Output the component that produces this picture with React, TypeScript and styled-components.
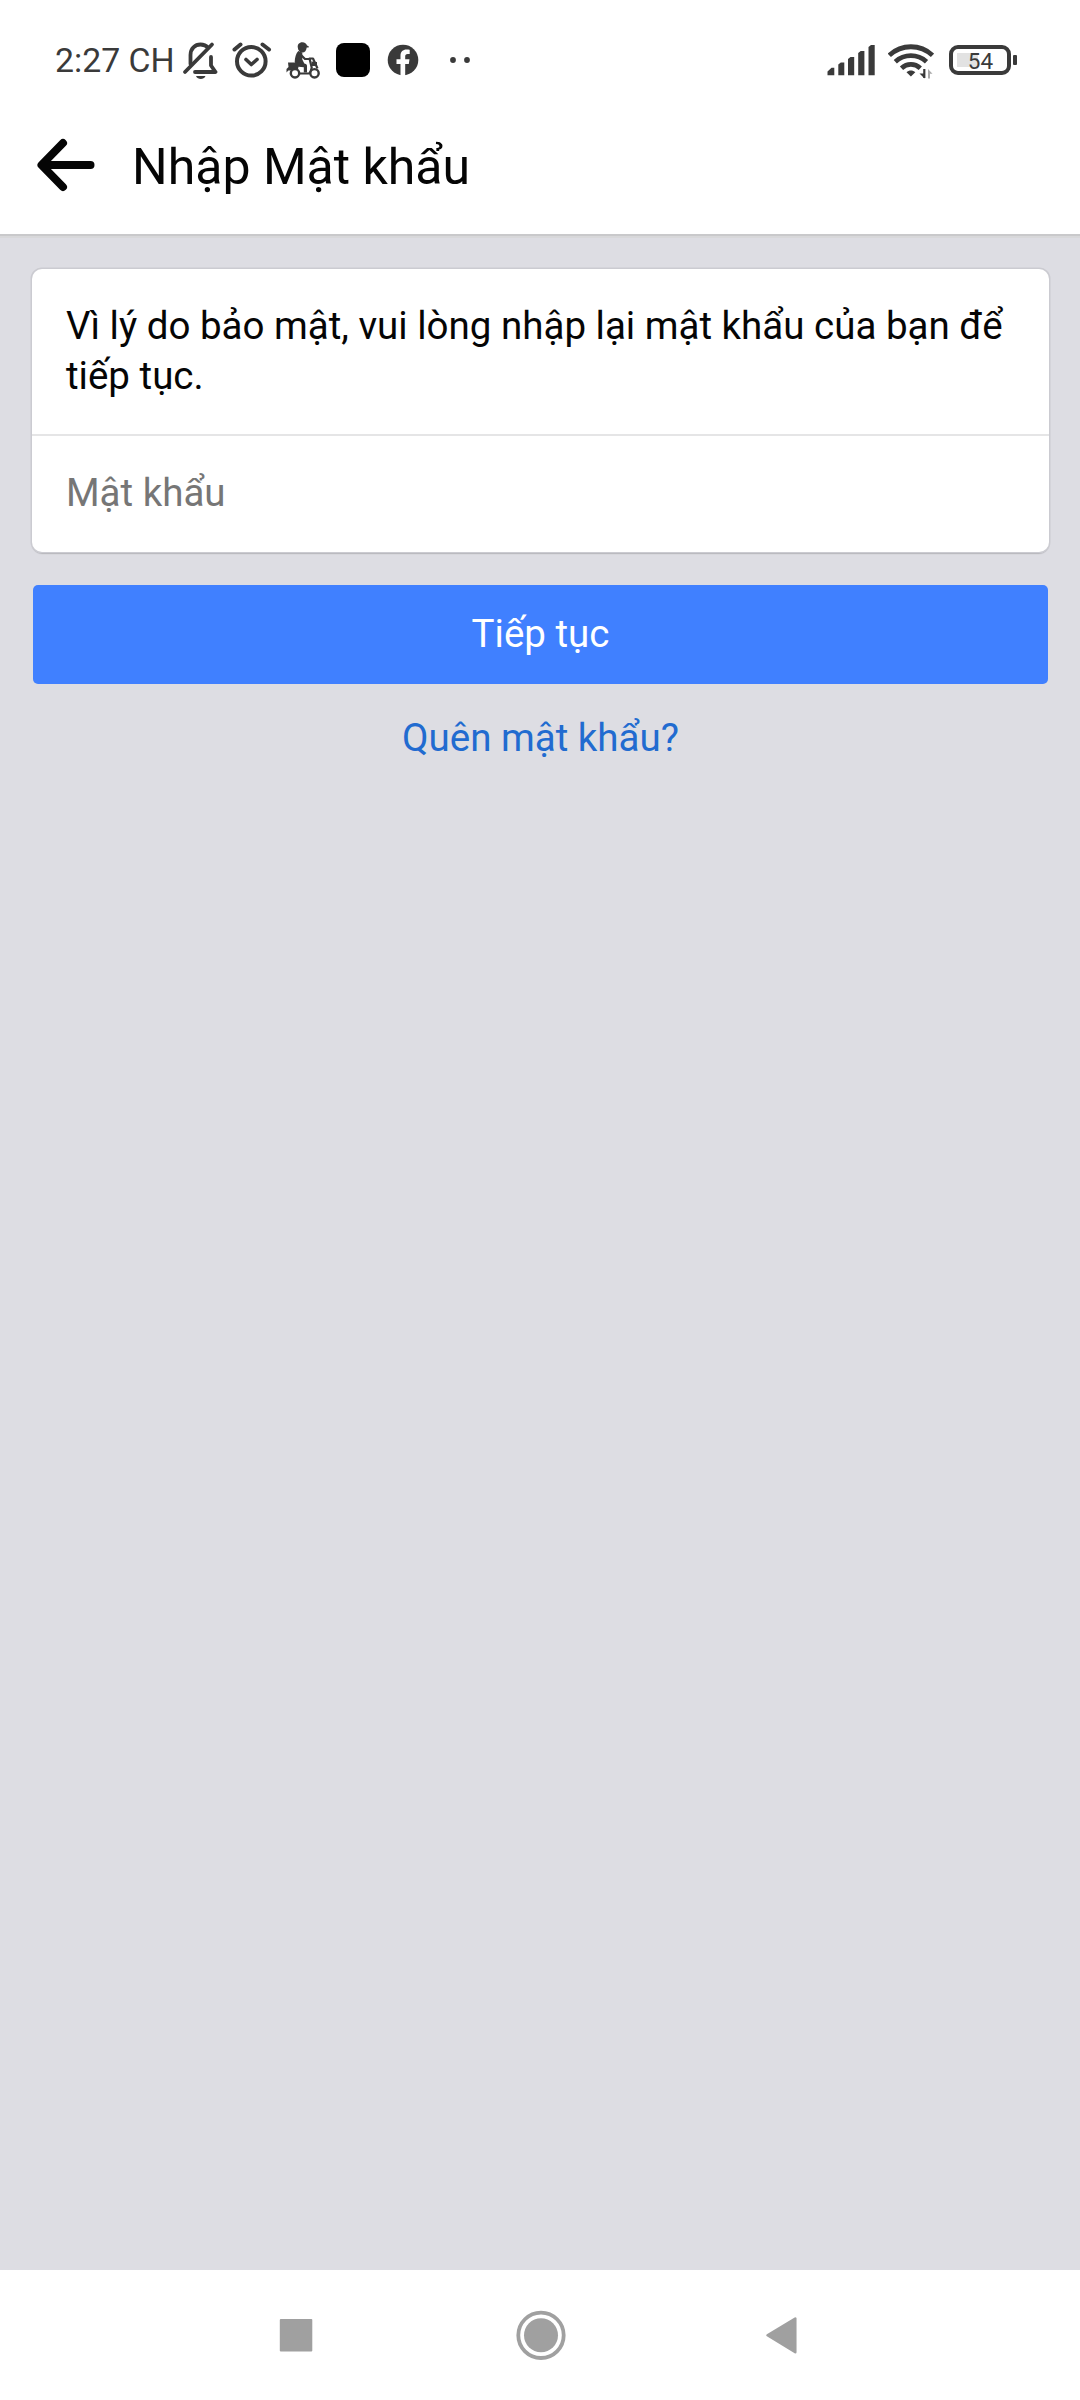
import React from 'react';
import styled, { createGlobalStyle } from 'styled-components';

const GlobalStyle = createGlobalStyle`
  body {
    margin: 0;
    background: #dddde3;
  }
  * {
    box-sizing: border-box;
  }
`;

const Screen = styled.div`
  display: flex;
  flex-direction: column;
  width: 1080px;
  height: 2400px;
  background: #dddde3;
  color: #050505;
  font-family: Roboto, 'Noto Sans', sans-serif;
  overflow: hidden;
`;

const StatusBar = styled.div`
  display: flex;
  align-items: center;
  flex: none;
  height: 120px;
  padding: 0 63px 0 55px;
  background: #fff;
  color: #3a3a3a;
`;

const Clock = styled.span`
  width: 127px;
  font-size: 33.8px;
  line-height: 40px;
  padding-top: 2px;
  white-space: nowrap;
`;

const Glyph = styled.svg<{ $gap?: number }>`
  display: block;
  flex: none;
  margin-left: ${(p) => p.$gap ?? 0}px;
`;

const Spacer = styled.div`
  flex: 1;
`;

const Battery = styled.div`
  display: flex;
  align-items: center;
  gap: 2px;
  margin-left: 15px;
`;

const BatteryShell = styled.div`
  display: flex;
  align-items: center;
  justify-content: center;
  width: 62px;
  height: 30px;
  padding: 1px 0 0 1px;
  border: 4px solid #3a3a3a;
  border-radius: 9px;
  background: linear-gradient(#e2e2e2, #e2e2e2) 4px 4px / 21px 14px no-repeat;
  font-size: 22.5px;
  line-height: 22px;
`;

const BatteryNub = styled.div`
  width: 4px;
  height: 10px;
  border-radius: 1px;
  background: #3a3a3a;
`;

const Header = styled.header`
  display: flex;
  align-items: center;
  flex: none;
  height: 116px;
  padding: 0 36px 24px;
  background: #fff;
  border-bottom: 2px solid #c9c9cb;
  box-shadow: 0 2px 0 #d8d8da;
`;

const BackButton = styled.button`
  display: flex;
  padding: 0;
  border: 0;
  background: none;
`;

const Title = styled.h1`
  margin: 3px 0 0 36px;
  font-size: 50px;
  font-weight: 400;
  line-height: 60px;
  white-space: nowrap;
`;

const Content = styled.main`
  display: flex;
  flex-direction: column;
  flex: 1;
  padding: 33px 32px 0 33px;
`;

const Card = styled.section`
  flex: none;
  height: 283px;
  margin: 0 -1px;
  border-radius: 10px;
  background: #fff;
  box-shadow: 0 0 0 1.5px #cbcbd1, 0 1.5px 1px #a2a2a6;
`;

const Message = styled.p`
  height: 167px;
  margin: 0;
  padding: 32px 34px 0;
  border-bottom: 2px solid #e5e5e6;
  font-size: 38.5px;
  line-height: 50px;
`;

const PasswordInput = styled.input`
  display: block;
  width: 100%;
  height: 114px;
  padding: 0 34px 2px;
  border: 0;
  outline: 0;
  background: transparent;
  font: 400 38.5px Roboto, 'Noto Sans', sans-serif;
  &::placeholder {
    color: #767676;
    opacity: 1;
  }
`;

const SubmitButton = styled.button`
  flex: none;
  height: 99px;
  margin-top: 33px;
  padding: 0 0 2px;
  border: 0;
  border-radius: 5px;
  background: #4080ff;
  color: #fff;
  font: 400 38.5px Roboto, 'Noto Sans', sans-serif;
`;

const ForgotLink = styled.a`
  align-self: center;
  margin-top: 29px;
  color: #216bd0;
  font-size: 38.5px;
  line-height: 50px;
`;

const NavBar = styled.nav`
  display: flex;
  flex: none;
  align-items: center;
  justify-content: space-between;
  height: 130px;
  padding: 0 281px 0 279px;
  background: #fff;
`;

const BellOffIcon = () => (
  <Glyph width="36" height="40" viewBox="182 40 36 40" fill="none" stroke="#3a3a3a" strokeWidth="3.8" strokeLinecap="round" strokeLinejoin="round">
    <path d="M190.500 64V55c0-6.500 4.500-10.500 10-10.500 3.500 0 6 1.300 7.800 3.200" />
    <path d="M211 57v8.500l4.500 6.500H195" />
    <path d="M185 72 212 44.500" />
    <path d="M196 76h9.500c-1 2.200-2.700 3-4.700 3s-3.800-.8-4.800-3z" fill="#3a3a3a" stroke="none" />
  </Glyph>
);

const AlarmIcon = () => (
  <Glyph $gap={14} width="40" height="40" viewBox="232 40 40 40" fill="none" stroke="#3a3a3a" strokeWidth="4" strokeLinecap="round" strokeLinejoin="round">
    <circle cx="251.300" cy="61.300" r="14.300" />
    <path d="m246 59.500 5.300 5 5.700-5" strokeWidth="3.600" />
    <path d="m234.500 49.500 6-5M262.500 44.500l6.500 5" />
  </Glyph>
);

const MopedIcon = () => (
  <Glyph $gap={14} width="36" height="40" viewBox="286 40 36 40" fill="none" stroke="#3a3a3a" strokeLinejoin="round">
    <path d="M297.800 47.500c-.6-3 1.500-5.300 4.500-5.300 2.500 0 4.200 1.400 4.700 3.300l1.700.7v1.400h-2c-.3 3-1.900 5-4.300 5-2.800 0-4.400-2.300-4.600-5.100z" fill="#3a3a3a" stroke="none" />
    <path d="M298.300 51c-2.300 2.300-3.500 6.500-3.600 11l1.500 2.500h8.600l-2.500-5v-7z" fill="#3a3a3a" stroke="none" />
    <path d="M300.500 54.500 305 59h6" strokeWidth="2.200" />
    <path d="M288 62.500h9l8 1.200c1.300.3 2 1 2 2.300v6.500h-3.200v-5.300l-5.300-.5-.8 3.800h-9.400l-1.800 2v-3.500l2-2z" fill="#3a3a3a" stroke="none" />
    <path d="M299 73.500h9.500c1.800 0 2.700-3.500 3.200-6l-2.200-9h3.500l4.500 10" strokeWidth="2.200" />
    <path d="M311.500 61.500 317 62v4h-5z" fill="#3a3a3a" stroke="none" />
    <circle cx="295" cy="73.300" r="4.200" strokeWidth="2.400" fill="#fff" />
    <circle cx="314.500" cy="73.300" r="4.200" strokeWidth="2.400" fill="#fff" />
  </Glyph>
);

const AppSquareIcon = () => (
  <Glyph $gap={14} width="34" height="40" viewBox="336 40 34 40">
    <rect x="336" y="43" width="34" height="34" rx="8" fill="#000" />
  </Glyph>
);

const FacebookIcon = () => (
  <Glyph $gap={17} width="32" height="40" viewBox="387 40 32 40">
    <circle cx="403" cy="60" r="15.300" fill="#3a3a3a" />
    <path d="M400.500 76V64h-4v-4.700h4v-3.600c0-4.100 2.400-6.200 6-6.200 1.300 0 2.800.2 3.200.3v4.100h-2c-1.900 0-2.500 1.100-2.500 2.300v3.100h4.300l-.7 4.700h-3.600v12z" fill="#fff" />
  </Glyph>
);

const MoreDots = () => (
  <Glyph $gap={31} width="24" height="40" viewBox="450 40 24 40" fill="#3a3a3a">
    <circle cx="453" cy="60" r="2.900" />
    <circle cx="467" cy="60" r="2.900" />
  </Glyph>
);

const SignalIcon = () => (
  <Glyph width="48" height="40" viewBox="827 40 48 40" fill="#3a3a3a">
    <path d="M827.500 75.300v-3.800l4-3.800h2.800v7.600zM838.300 75.300V64.500l2.500-2h3.500v12.800zM848 75.300V59l2.500-2h3.700v18.300zM858.200 75.300V53l2.500-2h3.700v24.300zM868.500 75.300V47l2.500-2h3.700v30.300z" />
  </Glyph>
);

const WifiIcon = () => (
  <Glyph $gap={13} width="46" height="40" viewBox="888 40 46 40" fill="none" stroke="#3a3a3a">
    <path d="M889.300 55.300c12.300-11.400 31-11.400 43.200 0" strokeWidth="4.800" />
    <path d="M895.300 61.700c9-8 22.200-8 31.200 0" strokeWidth="4.800" />
    <path d="M901.500 68.200c5.500-5 13.300-5 18.800 0" strokeWidth="4.800" />
    <path d="M906.500 72.200c2.500-2.200 6.300-2.200 8.800 0l-4.400 4.300z" fill="#3a3a3a" stroke="none" />
    <path d="M919.500 73.500h5v5z" fill="#3a3a3a" stroke="none" />
    <path d="M924.300 69v9" strokeWidth="2.200" />
    <path d="M928 78.500v-9.500l4.500 4.800h-2.500v4.700z" fill="#aaa" stroke="none" />
  </Glyph>
);

const BackArrow = () => (
  <svg width="60" height="56" viewBox="36 137 60 56" fill="none" stroke="#050505" strokeWidth="8" strokeLinecap="round" strokeLinejoin="round">
    <path d="M90.500 165H42M63 143 41.500 165 63 187" />
  </svg>
);

const RecentsIcon = () => (
  <svg width="34" height="34" viewBox="0 0 34 34">
    <rect x=".8" y="1" width="32.500" height="32.500" rx="1" fill="#a0a0a0" />
  </svg>
);

const HomeGlyph = styled.svg`
  margin-left: 3px;
`;

const HomeIcon = () => (
  <HomeGlyph width="50" height="50" viewBox="0 0 50 50">
    <circle cx="25" cy="25.300" r="22.700" fill="none" stroke="#a0a0a0" strokeWidth="3.800" />
    <circle cx="25" cy="25.300" r="17" fill="#a0a0a0" />
  </HomeGlyph>
);

const NavBackIcon = () => (
  <svg width="34" height="40" viewBox="0 0 34 40">
    <path d="M2.500 20.300 30.300 3.500v33.800z" fill="#a0a0a0" stroke="#a0a0a0" strokeWidth="2.500" strokeLinejoin="round" />
  </svg>
);

export default function App() {
  return (
    <>
      <GlobalStyle />
      <Screen>
        <StatusBar>
          <Clock>2:27 CH</Clock>
          <BellOffIcon />
          <AlarmIcon />
          <MopedIcon />
          <AppSquareIcon />
          <FacebookIcon />
          <MoreDots />
          <Spacer />
          <SignalIcon />
          <WifiIcon />
          <Battery>
            <BatteryShell>54</BatteryShell>
            <BatteryNub />
          </Battery>
        </StatusBar>
        <Header>
          <BackButton aria-label="Quay lại">
            <BackArrow />
          </BackButton>
          <Title>Nhập Mật khẩu</Title>
        </Header>
        <Content>
          <Card>
            <Message>Vì lý do bảo mật, vui lòng nhập lại mật khẩu của bạn để tiếp tục.</Message>
            <PasswordInput type="password" placeholder="Mật khẩu" />
          </Card>
          <SubmitButton>Tiếp tục</SubmitButton>
          <ForgotLink>Quên mật khẩu?</ForgotLink>
        </Content>
        <NavBar>
          <RecentsIcon />
          <HomeIcon />
          <NavBackIcon />
        </NavBar>
      </Screen>
    </>
  );
}
